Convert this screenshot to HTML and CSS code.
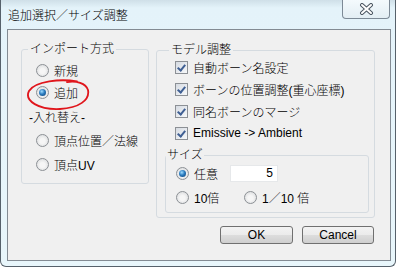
FILE: index.html
```
<!DOCTYPE html>
<html lang="ja">
<head>
  <meta charset="UTF-8">
  <title>追加選択／サイズ調整</title>
  <link rel="stylesheet" href="styles.css">
</head>
<body>

<div class="window">
  <div class="titlebar">
    <span class="title">追加選択／サイズ調整</span>
    <button class="close-button">
      <svg width="15" height="12" viewBox="0 0 15 12">
        <path d="M3 2 L12 10 M12 2 L3 10" stroke="#4a5560" stroke-width="4" stroke-linecap="round"/>
        <path d="M3 2 L12 10 M12 2 L3 10" stroke="#ffffff" stroke-width="2" stroke-linecap="round"/>
      </svg>
    </button>
  </div>

  <div class="client">
    <div class="columns">

      <fieldset class="group import-group">
        <legend>インポート方式</legend>
        <label class="opt"><span class="radio"></span>新規</label>
        <label class="opt marked">
          <span class="radio on"></span>追加
          <svg class="red-mark" width="66" height="32" viewBox="0 0 66 32">
            <path d="M52 2.5 C36 -0.5 10 2 4 12 C-1 22 14 31 35 30 C54 29 65 21 63 11 C61 4 51 1.5 42 3"
                  fill="none" stroke="#e0161c" stroke-width="1.8" stroke-linecap="round"/>
          </svg>
        </label>
        <div class="sub-title">-入れ替え-</div>
        <label class="opt"><span class="radio"></span>頂点位置／法線</label>
        <label class="opt last"><span class="radio"></span>頂点UV</label>
      </fieldset>

      <div class="right-col">
        <fieldset class="group model-group">
          <legend>モデル調整</legend>
          <label class="check-row"><span class="check"></span>自動ボーン名設定</label>
          <label class="check-row"><span class="check"></span>ボーンの位置調整(重心座標)</label>
          <label class="check-row"><span class="check"></span>同名ボーンのマージ</label>
          <label class="check-row"><span class="check"></span>Emissive -&gt; Ambient</label>

          <fieldset class="group size-group">
            <legend>サイズ</legend>
            <div class="size-row">
              <label class="size-opt first"><span class="radio on"></span>任意</label>
              <input class="size-input" type="text" value="5">
            </div>
            <div class="size-row">
              <label class="size-opt wide"><span class="radio"></span>10倍</label>
              <label class="size-opt"><span class="radio"></span>1／10 倍</label>
            </div>
          </fieldset>
        </fieldset>

        <div class="buttons">
          <button class="btn ok">OK</button>
          <button class="btn cancel">Cancel</button>
        </div>
      </div>

    </div>
  </div>
</div>

</body>
</html>
```

FILE: styles.css
```
body {
  margin: 0;
  font-family: "Liberation Sans", "Noto Sans CJK JP", sans-serif;
  font-size: 12px;
  font-weight: 300;
  color: #000;
  background: #ffffff;
}

.window {
  width: 396px;
  height: 267px;
  box-sizing: border-box;
  border: 1px solid #56616b;
  border-top: none;
  border-radius: 0 0 6px 6px;
  background: linear-gradient(#cfdfe8, #e4f3fa 8px, #e8f6fb);
  display: flex;
  flex-direction: column;
}

.titlebar {
  height: 29px;
  display: flex;
  align-items: flex-start;
}
.title {
  padding: 8px 0 0 7px;
  line-height: 14px;
  font-size: 12px;
  font-family: "Noto Sans CJK JP", sans-serif;
}
.close-button {
  margin-left: auto;
  margin-right: 5px;
  width: 48px;
  height: 19px;
  padding: 0;
  border: 1px solid #7d8a96;
  border-top: none;
  border-radius: 0 0 4px 4px;
  background: linear-gradient(#f4fafd, #e3eef4);
  display: flex;
  align-items: center;
  justify-content: center;
}

.client {
  flex: 1;
  margin: 0 4px 5px 6px;
  border: 1px solid #838b93;
  background: #f0f0f0;
}
.columns {
  display: flex;
  align-items: flex-start;
  gap: 7px;
  padding: 13px 0 0 13px;
}

.group {
  margin: 0;
  min-width: 0;
  box-sizing: border-box;
  border: 1px solid #d5dbe0;
  border-radius: 3px;
  padding: 0;
}
.group legend {
  line-height: 12px;
  padding: 0 2px;
}

.import-group {
  width: 128px;
  padding: 4px 0 8px 14px;
}
.import-group legend {
  margin-left: -8px;
}

.opt {
  display: flex;
  align-items: center;
  gap: 5px;
  height: 22px;
  position: relative;
}
.opt.last {
  margin-top: 2px;
}
.sub-title {
  height: 22px;
  line-height: 22px;
  margin: 4px 0 0 -7px;
}

.red-mark {
  position: absolute;
  left: -11px;
  top: -2px;
}

.radio {
  width: 13px;
  height: 13px;
  box-sizing: border-box;
  border-radius: 50%;
  border: 1px solid #8c9095;
  background: radial-gradient(circle at 50% 55%, #f6f6f6 30%, #d3d5d7 100%);
  display: flex;
  align-items: center;
  justify-content: center;
  flex-shrink: 0;
}
.radio.on::after {
  content: "";
  width: 7px;
  height: 7px;
  border-radius: 50%;
  background: radial-gradient(circle at 40% 35%, #9fdcff 0%, #2a7bbf 45%, #0e3d6e 100%);
}

.right-col {
  margin-top: 1px;
}
.model-group {
  width: 219px;
  padding: 0 5px 4px 8px;
}
.model-group > legend {
  margin-left: 4px;
}

.check-row {
  display: flex;
  align-items: center;
  gap: 5px;
  height: 22px;
  margin-left: 10px;
}
.check {
  width: 13px;
  height: 13px;
  box-sizing: border-box;
  border: 1px solid #8c9095;
  background: linear-gradient(135deg, #d6dbe2, #f6f8fa);
  display: flex;
  justify-content: center;
  flex-shrink: 0;
}
.check::after {
  content: "";
  width: 3px;
  height: 6px;
  margin-top: 1px;
  border-right: 2px solid #3f5f93;
  border-bottom: 2px solid #3f5f93;
  transform: rotate(40deg);
}

.size-group {
  width: 204px;
  margin-top: 5px;
  padding: 0 0 3px 10px;
}
.size-group legend {
  margin-left: -10px;
  padding: 0 1px;
}
.size-row {
  display: flex;
  align-items: center;
  height: 24px;
}
.size-opt {
  display: flex;
  align-items: center;
  gap: 5px;
}
.size-opt.first {
  width: 54px;
}
.size-opt.wide {
  width: 68px;
}
.size-input {
  width: 48px;
  height: 17px;
  box-sizing: border-box;
  border: 1px solid #e6e8ea;
  background: #ffffff;
  font: inherit;
  text-align: right;
  padding: 0 4px;
}

.buttons {
  display: flex;
  justify-content: flex-end;
  gap: 9px;
  margin-top: 8px;
  padding-right: 1px;
}
.btn {
  height: 18px;
  padding: 0;
  font: inherit;
  font-size: 12px;
  border: 1px solid #707070;
  border-radius: 3px;
  background: linear-gradient(#f3f3f3, #ebebeb 50%, #dddddd 51%, #cfcfcf);
}
.btn.ok {
  width: 73px;
}
.btn.cancel {
  width: 72px;
}
```
